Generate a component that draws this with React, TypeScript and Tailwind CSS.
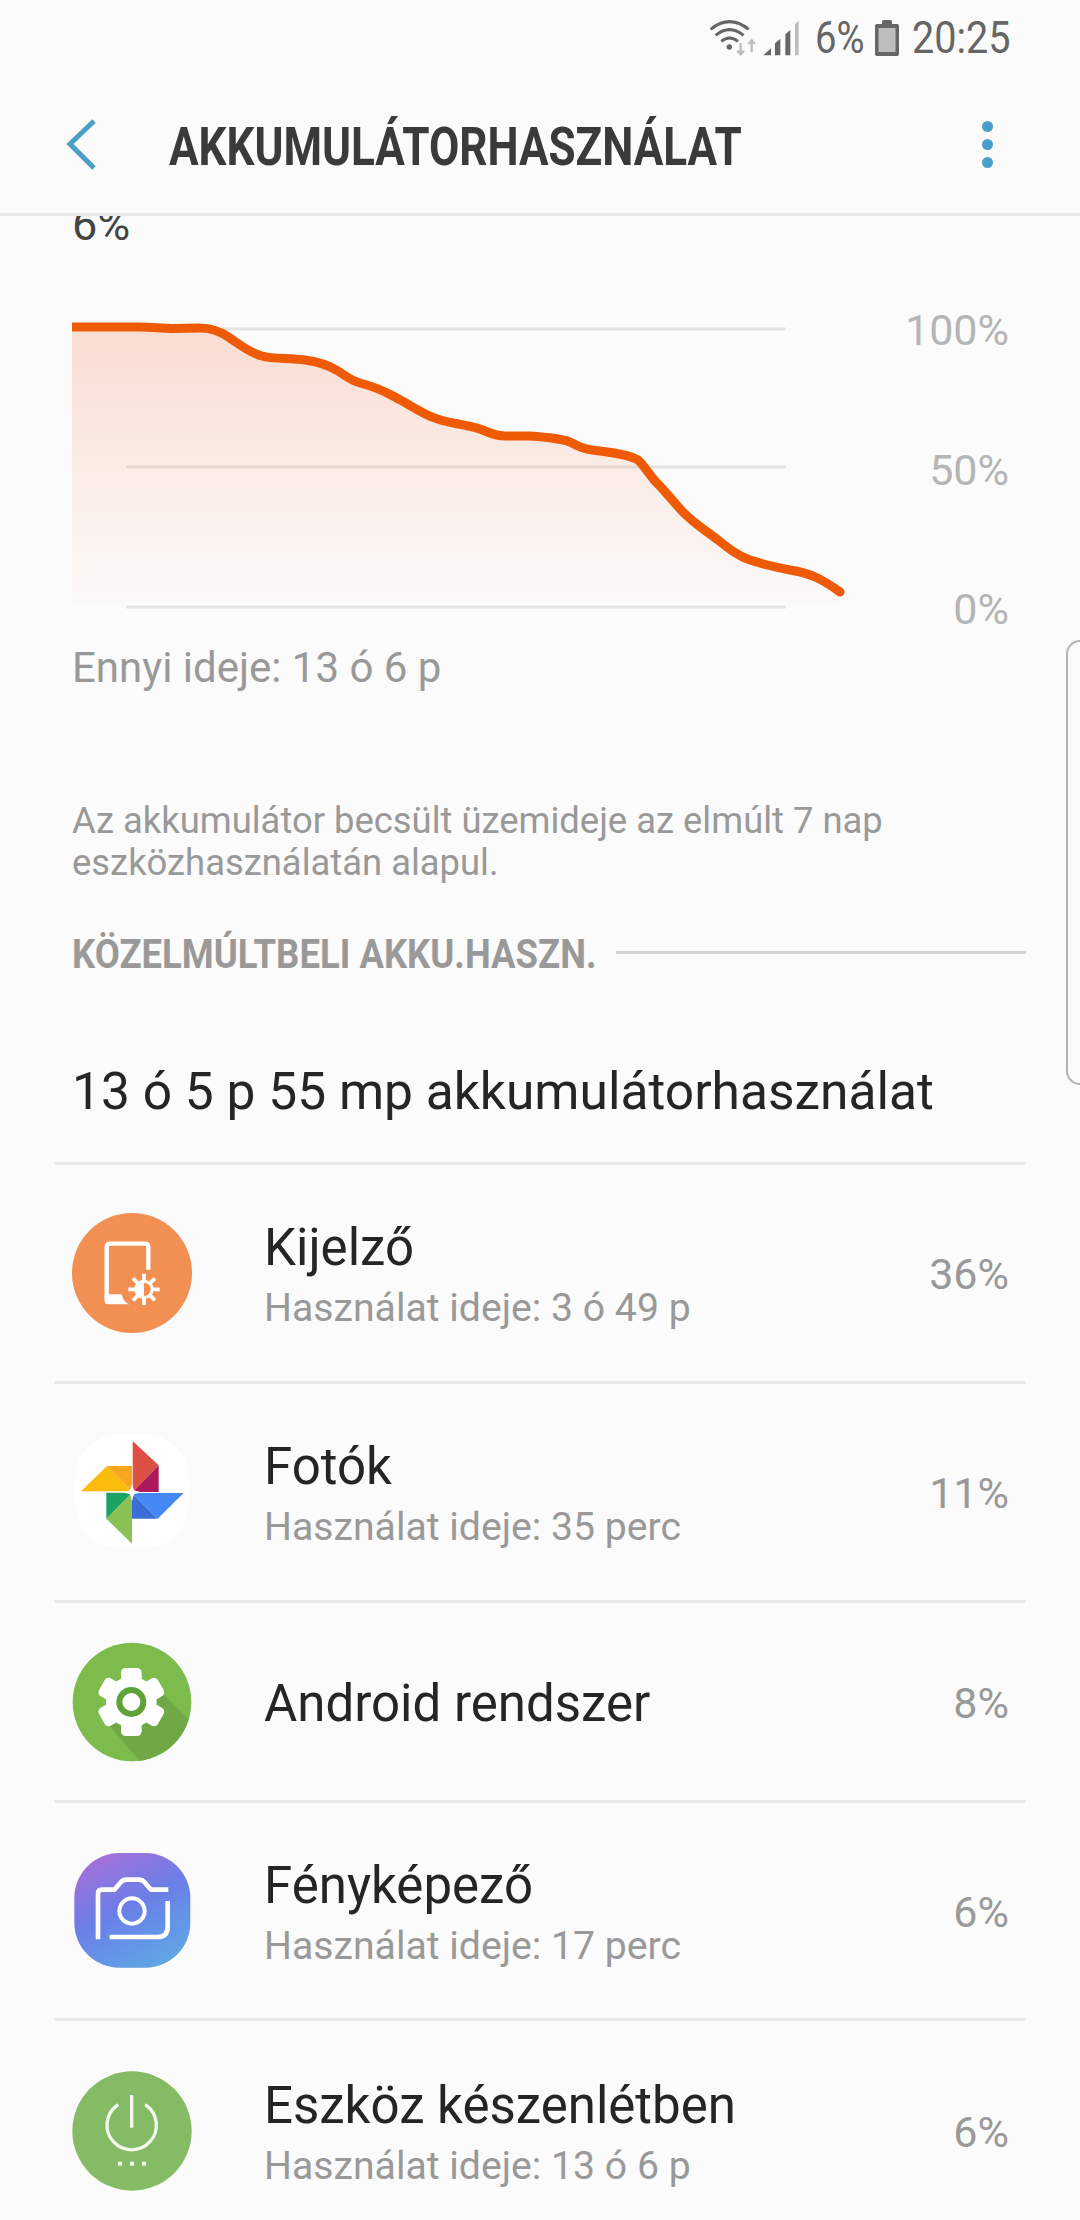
const roboto = "font-['Roboto',sans-serif]";

const WifiSignal = () => (
  <svg width="97" height="42" viewBox="75 45 291 126" fill="none">
    <path d="M92 82 Q148 36 206 82" stroke="#666" strokeWidth="9" />
    <path d="M107 100 Q148 66 191 100" stroke="#666" strokeWidth="9" />
    <path d="M124 118 Q148 98 174 118" stroke="#666" strokeWidth="9" />
    <circle cx="148" cy="135" r="8" fill="#666" />
    <path d="M182 124 V154 M172 146 L182 157 L192 146" stroke="#bdbdbd" strokeWidth="7" />
    <path d="M215 150 V118 M205 126 L215 115 L225 126" stroke="#bdbdbd" strokeWidth="7" />
    <polygon points="250,160 273,139 273,160" fill="#666" />
    <polygon points="285,160 285,124 301,110 301,160" fill="#666" />
    <polygon points="316,160 316,97 331,84 331,160" fill="#666" />
    <polygon points="345,160 345,66 356,57 356,160" fill="#bdbdbd" />
  </svg>
);

const Battery = () => (
  <svg width="24" height="36" viewBox="0 0 24 36">
    <path d="M2 4 H7 V1.5 Q7 0 8.5 0 H15.5 Q17 0 17 1.5 V4 H22 Q24 4 24 6 V34 Q24 36 22 36 H2 Q0 36 0 34 V6 Q0 4 2 4 Z" fill="#666" />
    <rect x="3.5" y="8" width="17" height="24" fill="#bdbdbd" />
  </svg>
);

const Chart = () => {
  const line =
    "M72 327 L140 327 C155 327 160 328.5 172 328.5 L200 328 C212 328 220 331 230 338 C240 345 250 353 262 356 C272 359 290 358 305 360 C320 362 330 366 338 371 C346 376 350 380 360 383 C372 386 384 391 395 397 C410 405 420 412 432 417 C445 423 465 424 480 429 C490 433 495 436 505 436 L530 436 C545 437 560 438 570 442 C580 447 585 450 600 451 C615 453 630 455 638 460 C644 465 650 476 657 483 C665 491 672 500 682 511 C692 522 705 530 718 540 C728 548 738 556 750 560 C765 565 775 567 790 570 C810 573 822 579 840 592";
  return (
    <svg width="800" height="320" viewBox="72 300 800 320" fill="none" className="shrink-0">
      <defs>
        <linearGradient id="fade" x1="0" y1="0" x2="0" y2="1">
          <stop offset="0" stopColor="#f0642a" stopOpacity="0.2" />
          <stop offset="1" stopColor="#f0642a" stopOpacity="0.01" />
        </linearGradient>
      </defs>
      <path d="M126 329 H786 M126 467 H786 M126 607 H786" stroke="#e4e4e4" strokeWidth="3" />
      <path d={line + " L840 605 L72 605 Z"} fill="url(#fade)" />
      <path d={line} stroke="#ee5a05" strokeWidth="9" strokeLinecap="round" />
    </svg>
  );
};

const DisplayIcon = () => (
  <svg width="120" height="120" viewBox="96 68 360 360">
    <circle cx="276" cy="248" r="180" fill="#f28f52" />
    <path d="M325 238 V170 Q325 160 315 160 H210 Q200 160 200 170 V330" fill="none" stroke="#fff" strokeWidth="13" />
    <path d="M194 312 H245 Q250 335 268 342 H204 Q194 342 194 332 Z" fill="#fff" />
    <path d="M312 250 V344 M265 297 H359 M279 264 L345 330 M345 264 L279 330" stroke="#fff" strokeWidth="11" />
    <circle cx="312" cy="297" r="29" fill="#fff" />
    <path d="M312 277 A20 20 0 0 1 312 317 Z" fill="#f28f52" />
  </svg>
);

const PhotosIcon = () => (
  <svg width="120" height="120" viewBox="65 35 360 360">
    <rect x="75" y="42" width="340" height="342" rx="130" fill="#fff" />
    <polygon points="247,62 325,135 247,215" fill="#dd5144" />
    <polygon points="325,135 325,215 247,215" fill="#ad1a5c" />
    <polygon points="92,213 170,137 245,213" fill="#fbbc0e" />
    <polygon points="170,137 245,137 245,213" fill="#f9a51d" />
    <polygon points="245,370 168,295 245,217" fill="#8bc152" />
    <polygon points="168,295 168,217 245,217" fill="#1ca362" />
    <polygon points="400,218 322,295 245,218" fill="#4688f1" />
    <polygon points="322,295 245,295 245,218" fill="#3a6fd8" />
    <polygon points="245,190 251,210 272,216 251,222 245,242 239,222 218,216 239,210" fill="#fff" />
  </svg>
);

const GearIcon = () => (
  <svg width="120" height="120" viewBox="67 35 360 360">
    <defs>
      <clipPath id="gearClip">
        <circle cx="247" cy="215" r="178" />
      </clipPath>
    </defs>
    <circle cx="247" cy="215" r="178" fill="#7cbb4c" />
    <polygon points="175,280 340,190 450,300 285,410" fill="#6fa845" clipPath="url(#gearClip)" />
    <g fill="#fff">
      <circle cx="245" cy="215" r="76" />
      <rect x="214" y="113" width="62" height="204" rx="14" />
      <rect x="214" y="113" width="62" height="204" rx="14" transform="rotate(60 245 215)" />
      <rect x="214" y="113" width="62" height="204" rx="14" transform="rotate(120 245 215)" />
    </g>
    <circle cx="245" cy="215" r="36" fill="#fff" stroke="#5ea33a" strokeWidth="18" />
  </svg>
);

const CameraIcon = () => (
  <svg width="120" height="120" viewBox="65 32 360 360">
    <defs>
      <linearGradient id="cam" x1="0.25" y1="0" x2="0.75" y2="1">
        <stop offset="0" stopColor="#a470d8" />
        <stop offset="0.45" stopColor="#6b7ee8" />
        <stop offset="1" stopColor="#5ea8e4" />
      </linearGradient>
    </defs>
    <rect x="72" y="38" width="348" height="344" rx="135" fill="url(#cam)" />
    <g fill="none" stroke="#fff" strokeWidth="14">
      <path d="M143 297 V160 Q143 148 155 148 H192 L212 125 Q218 118 228 118 H268 Q276 118 282 125 L302 148 H354" />
      <path d="M178 290 H322 Q352 290 352 260 V182" />
      <circle cx="245" cy="212" r="38" strokeWidth="12" />
    </g>
  </svg>
);

const PowerIcon = () => (
  <svg width="120" height="120" viewBox="66 60 360 360">
    <circle cx="246" cy="240" r="179" fill="#85bb65" />
    <g fill="none" stroke="#f3f9ec" strokeWidth="10">
      <path d="M245 132 V230" />
      <path d="M201 163 A74 74 0 1 0 289 163" strokeLinecap="round" />
    </g>
    <g fill="#f3f9ec">
      <rect x="204" y="332" width="12" height="12" />
      <rect x="240" y="332" width="12" height="12" />
      <rect x="276" y="332" width="12" height="12" />
    </g>
  </svg>
);

const rows = [
  { icon: <DisplayIcon />, name: "Kijelző", sub: "Használat ideje: 3 ó 49 p", pct: "36%", h: "h-[219px]" },
  { icon: <PhotosIcon />, name: "Fotók", sub: "Használat ideje: 35 perc", pct: "11%", h: "h-[219px]" },
  { icon: <GearIcon />, name: "Android rendszer", sub: "", pct: "8%", h: "h-[200px]" },
  { icon: <CameraIcon />, name: "Fényképező", sub: "Használat ideje: 17 perc", pct: "6%", h: "h-[218px]" },
  { icon: <PowerIcon />, name: "Eszköz készenlétben", sub: "Használat ideje: 13 ó 6 p", pct: "6%", h: "h-[220px]" },
];

export default function App() {
  return (
    <div className={`${roboto} relative w-[1080px] h-[2220px] overflow-hidden bg-[#fbfbfb] flex flex-col`}>
      {/* Status bar */}
      <div className="h-[75px] shrink-0 flex items-center justify-end pr-[71px] text-[#666] text-[45px] leading-none">
        <WifiSignal />
        <span className="w-[47px] ml-[13px] scale-x-[0.85] origin-left whitespace-nowrap">6%</span>
        <div className="ml-[13px]">
          <Battery />
        </div>
        <span className="w-[97px] ml-[13px] scale-x-[0.88] origin-left whitespace-nowrap">20:25</span>
      </div>

      {/* Action bar */}
      <div className="h-[141px] shrink-0 flex items-center border-b-[3px] border-[#e8e8e8] bg-[#fbfbfb] relative z-10">
        <svg width="30" height="52" viewBox="0 0 30 52" fill="none" className="ml-[66px]">
          <path d="M28 3 L4 26 L28 50" stroke="#4b9fc4" strokeWidth="5" />
        </svg>
        <h1 className="ml-[73px] mt-[6px] w-[574px] text-[54px] font-bold text-[#3a3a3a] leading-none whitespace-nowrap scale-x-[0.815] origin-left">
          AKKUMULÁTORHASZNÁLAT
        </h1>
        <div className="ml-auto mr-[87px] flex flex-col gap-[7px]">
          <span className="w-[11px] h-[11px] rounded-full bg-[#4a9fc9]" />
          <span className="w-[11px] h-[11px] rounded-full bg-[#4a9fc9]" />
          <span className="w-[11px] h-[11px] rounded-full bg-[#4a9fc9]" />
        </div>
      </div>

      {/* Content */}
      <div className="flex-1 overflow-hidden">
        <p className="mt-[-17px] pl-[72px] text-[45px] leading-[52px] text-[#444]">6%</p>
        <div className="mt-[49px] pl-[72px] flex h-[320px]">
          <Chart />
          <div className="flex-1 flex flex-col items-end justify-between pr-[71px] text-[43px] leading-[50px] text-[#b5b5b5] h-[329px] mt-[5px]">
            <span>100%</span>
            <span>50%</span>
            <span>0%</span>
          </div>
        </div>
        <p className="mt-[23px] pl-[72px] text-[42px] leading-[50px] text-[#999]">Ennyi ideje: 13 ó 6 p</p>
        <p className="mt-[107px] pl-[72px] text-[36.4px] leading-[42px] text-[#999]">
          Az akkumulátor becsült üzemideje az elmúlt 7 nap
          <br />
          eszközhasználatán alapul.
        </p>
        <div className="mt-[41px] pl-[72px] pr-[54px] flex items-center">
          <span className="w-[523px] mt-[4px] text-[41px] font-bold text-[#999] leading-[50px] whitespace-nowrap scale-x-[0.89] origin-left">
            KÖZELMÚLTBELI AKKU.HASZN.
          </span>
          <div className="ml-[21px] flex-1 h-[3px] bg-[#d4d4d4]" />
        </div>
        <div className="h-[186px] pt-[43px] mx-[54px] pl-[18px] flex items-center border-b-[3px] border-[#e8e8e8] text-[51.5px] text-[#252525]">
          13 ó 5 p 55 mp akkumulátorhasználat
        </div>
        {rows.map((r, i) => (
          <div key={r.name} className={`${r.h} mx-[54px] pl-[18px] pr-[17px] flex items-center ${i < rows.length - 1 ? "border-b-[3px] border-[#e8e8e8]" : ""}`}>
            <div className="w-[120px] h-[120px] shrink-0">{r.icon}</div>
            <div className="ml-[72px] flex-1 pt-[4px]">
              <p className="text-[51px] leading-[58px] text-[#252525]">{r.name}</p>
              {r.sub && <p className="text-[39.2px] leading-[46px] mt-[8px] text-[#999]">{r.sub}</p>}
            </div>
            <span className="text-[43px] pt-[3px] text-[#999]">{r.pct}</span>
          </div>
        ))}
      </div>

      {/* Edge panel handle */}
      <div className="absolute right-0 top-[640px] h-[445px] w-[14px] border-l-2 border-y-2 border-[#b5b5b5] rounded-l-[14px]" />
    </div>
  );
}
